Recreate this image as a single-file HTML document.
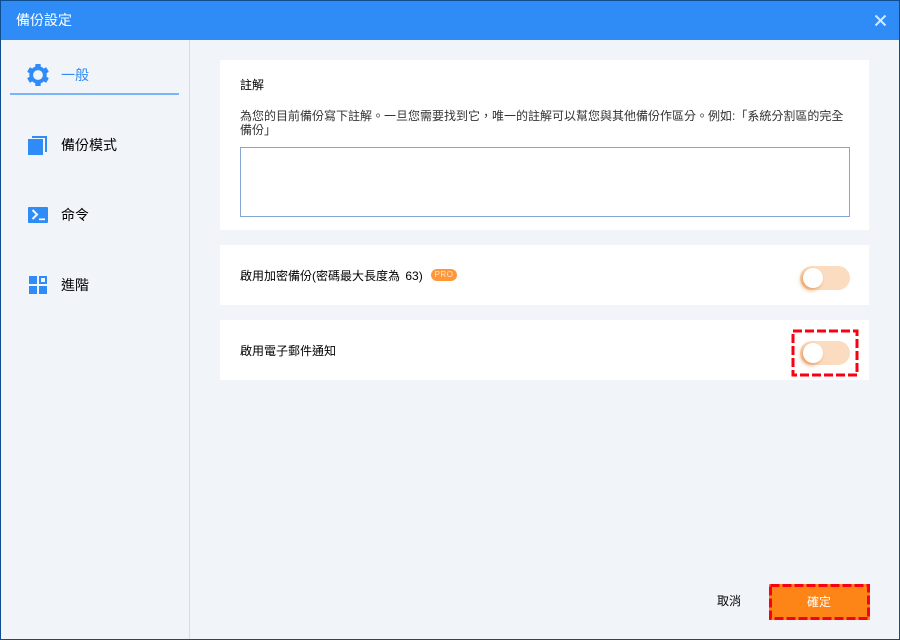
<!DOCTYPE html>
<html lang="zh-Hant">
<head>
<meta charset="utf-8">
<style>
html,body{margin:0;padding:0;width:900px;height:640px;overflow:hidden;background:#f1f5fa}
body{position:relative;font-family:"Liberation Sans","WenQuanYi Zen Hei","Noto Sans CJK TC",sans-serif;font-size:12px;color:#000}
div,svg{position:absolute;box-sizing:border-box}
.t{white-space:nowrap;line-height:16px}
.title{left:0;top:0;width:900px;height:40px;background:#2f8cf7}
.frame{left:0;top:0;width:900px;height:640px;border:1px solid #0e4c8e;z-index:9;pointer-events:none}
.card{left:220px;width:649px;background:#fff}
.sw{left:800px;width:50px;height:24px;border-radius:12px;background:#fcdcc0}
.knob{left:3px;top:2px;width:20px;height:20px;border-radius:50%;background:#fff;box-shadow:-2px 2px 4px rgba(225,140,70,.8)}
.nav{left:61px;font-size:14px;line-height:18px;white-space:nowrap}
</style>
</head>
<body>
<div class="title"></div>
<div class="t" style="left:16px;top:12px;font-size:14px;color:#fff">備份設定</div>
<svg style="left:873px;top:13px" width="15" height="15" viewBox="0 0 15 15"><path d="M2.500 2.500L12.500 12.500M12.500 2.500L2.500 12.500" stroke="#d6e8fd" stroke-width="2" fill="none"/></svg>

<div style="left:189px;top:40px;width:1px;height:600px;background:#d8dde3"></div>

<svg style="left:27px;top:64px" width="22" height="22" viewBox="0 0 22 22">
<circle cx="11" cy="11" r="6.800" fill="none" stroke="#2f8cf7" stroke-width="3.800"/>
<g fill="#2f8cf7">
<rect x="8.300" y="0" width="5.400" height="5" rx=".6"/>
<rect x="8.300" y="0" width="5.400" height="5" rx=".6" transform="rotate(60 11 11)"/>
<rect x="8.300" y="0" width="5.400" height="5" rx=".6" transform="rotate(120 11 11)"/>
<rect x="8.300" y="0" width="5.400" height="5" rx=".6" transform="rotate(180 11 11)"/>
<rect x="8.300" y="0" width="5.400" height="5" rx=".6" transform="rotate(240 11 11)"/>
<rect x="8.300" y="0" width="5.400" height="5" rx=".6" transform="rotate(300 11 11)"/>
</g></svg>
<div class="nav" style="top:66px;color:#2f8cf7">一般</div>
<div style="left:10px;top:93px;width:169px;height:2px;background:#7ab5fb"></div>

<svg style="left:28px;top:136px" width="19" height="19" viewBox="0 0 19 19"><path fill="#2f8cf7" d="M0 3h15v16H0zM4 0h15v16h-2V2H4z"/></svg>
<div class="nav" style="top:136px">備份模式</div>

<svg style="left:28px;top:207px" width="20" height="16" viewBox="0 0 20 16"><rect width="20" height="16" rx="1" fill="#2f8cf7"/><path d="M4.500 3L9 7.500 4.500 12" stroke="#eef5ff" stroke-width="2.100" fill="none"/><path d="M11 12.300h6" stroke="#fff" stroke-width="1.700"/></svg>
<div class="nav" style="top:206px">命令</div>

<svg style="left:29px;top:276px" width="18" height="18" viewBox="0 0 18 18"><path fill="#2f8cf7" fill-rule="evenodd" d="M0 0h8v8H0zM10 0h8v8h-8zM12 2v4h4V2zM0 10h8v8H0zM10 10h8v8h-8z"/></svg>
<div class="nav" style="top:276px">進階</div>

<div class="card" style="top:60px;height:170px"></div>
<div class="t" style="left:240px;top:77px">註解</div>
<div class="t" style="left:240px;top:109px;width:610px;white-space:normal;line-height:14px;color:#333">為您的目前備份寫下註解。一旦您需要找到它，唯一的註解可以幫您與其他備份作區分。例如:「系統分割區的完全備份」</div>
<div style="left:240px;top:147px;width:610px;height:70px;border:1px solid #86a5d2;background:#fff"></div>

<div class="card" style="top:245px;height:60px"></div>
<div class="t" style="left:240px;top:268px">啟用加密備份(密碼最大長度為 <span style="margin-left:2px">63)</span></div>
<div style="left:431px;top:269px;width:26px;height:12px;border-radius:6px;background:#fd973a;color:#ffe6d0;font-size:8px;line-height:12px;text-align:center;letter-spacing:.5px">PRO</div>
<div class="sw" style="top:266px"><div class="knob"></div></div>

<div class="card" style="top:320px;height:60px"></div>
<div class="t" style="left:240px;top:343px">啟用電子郵件通知</div>
<div class="sw" style="top:341px"><div class="knob"></div></div>
<svg style="left:791px;top:329px" width="68" height="48" viewBox="0 0 68 48"><rect x="2" y="2" width="64" height="44" fill="none" stroke="#fb0010" stroke-width="3" stroke-dasharray="9 3"/></svg>

<div class="t" style="left:717px;top:593px">取消</div>
<svg style="left:769px;top:584px" width="101" height="36" viewBox="0 0 101 36"><rect width="101" height="36" fill="#fd8417"/><rect x="1.500" y="1.500" width="98" height="33" fill="none" stroke="#fb0010" stroke-width="3" stroke-dasharray="9 3"/></svg>
<div class="t" style="left:807px;top:594px;color:#fff">確定</div>

<div class="frame"></div>
</body>
</html>
